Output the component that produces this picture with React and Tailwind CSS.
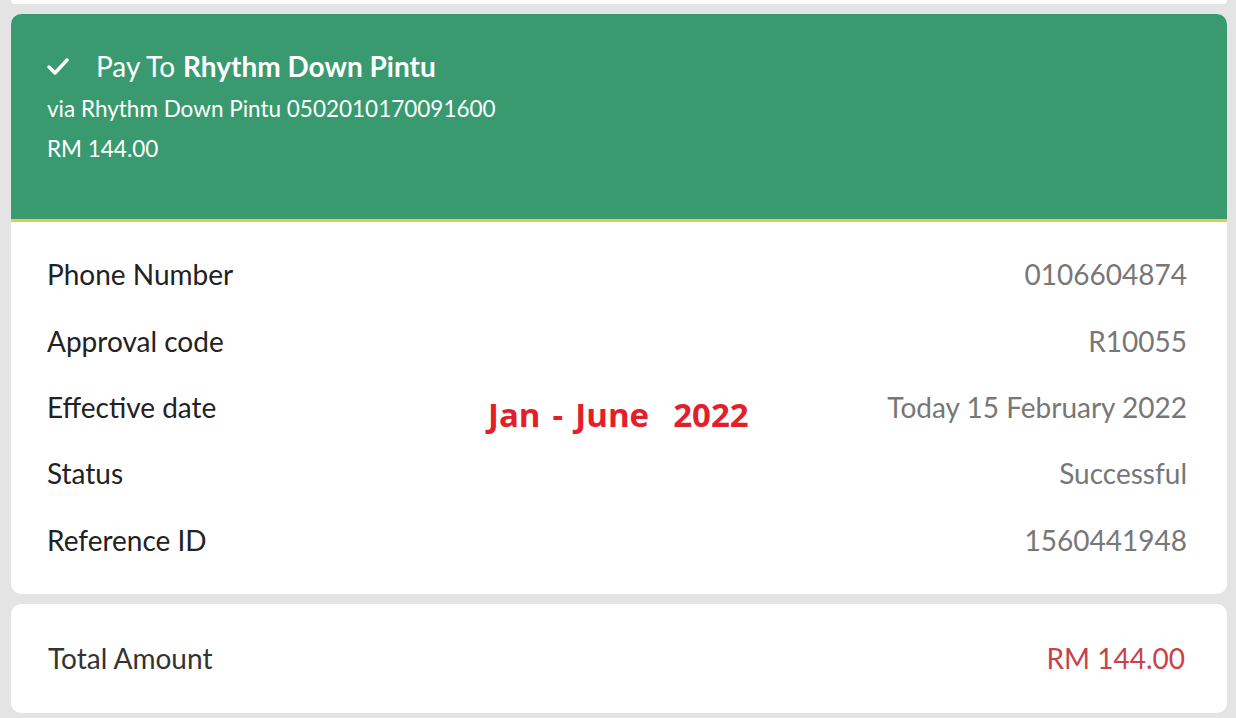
import React from 'react';

const rows = [
  { label: 'Phone Number', value: '0106604874' },
  { label: 'Approval code', value: 'R10055' },
  { label: 'Effective date', value: 'Today 15 February 2022' },
  { label: 'Status', value: 'Successful' },
  { label: 'Reference ID', value: '1560441948' },
];

function Check() {
  return (
    <svg width="22" height="18" viewBox="0 0 22 18" fill="none">
      <path d="M2 10 L8 16 L20 3" stroke="white" strokeWidth="3.4" strokeLinecap="round" strokeLinejoin="round" />
    </svg>
  );
}

export default function App() {
  return (
    <div
      className="flex min-h-[718px] flex-col gap-[10px] bg-[#e4e4e4] pl-[11px] pr-[9px] pb-[6px]"
      style={{ fontFamily: 'Lato, "Open Sans", sans-serif' }}
    >
      <div className="h-[4px] rounded-b-[10px] bg-white" />

      {/* Receipt card */}
      <div className="relative overflow-hidden rounded-[10px] bg-white">
        <div className="h-[208px] border-b-[3px] border-[#e6c94e] bg-[#3a9a6f] px-[36px] pt-[34px] text-white">
          <div className="flex items-center">
            <Check />
            <span className="ml-[27px] text-[28px] leading-[36px]">Pay To</span>
            <span className="ml-[8px] text-[28px] font-bold leading-[36px]">Rhythm Down Pintu</span>
          </div>
          <div className="mt-[11px] text-[22.5px] leading-[28px]">via Rhythm Down Pintu 0502010170091600</div>
          <div className="mt-[12px] text-[22.5px] leading-[28px]">RM 144.00</div>
        </div>

        <div className="pl-[36px] pr-[40px] pt-[19px] pb-[21px]">
          {rows.map((row) => (
            <div key={row.label} className="flex h-[66.4px] items-center justify-between text-[28px]">
              <span className="text-[#222]">{row.label}</span>
              <span className="text-[#777]">{row.value}</span>
            </div>
          ))}
        </div>

        <div
          className="absolute left-[477px] top-[376px] text-[33px] font-bold text-[#e3202a]"
          style={{ fontFamily: '"Open Sans", Lato, sans-serif', wordSpacing: '3.5px' }}
        >
          Jan - June&nbsp; 2022
        </div>
      </div>

      {/* Total */}
      <div className="flex h-[109px] items-center justify-between rounded-[10px] bg-white pl-[37px] pr-[42px] text-[28px]">
        <span className="text-[#333]">Total Amount</span>
        <span className="text-[#c9424a]">RM 144.00</span>
      </div>
    </div>
  );
}
